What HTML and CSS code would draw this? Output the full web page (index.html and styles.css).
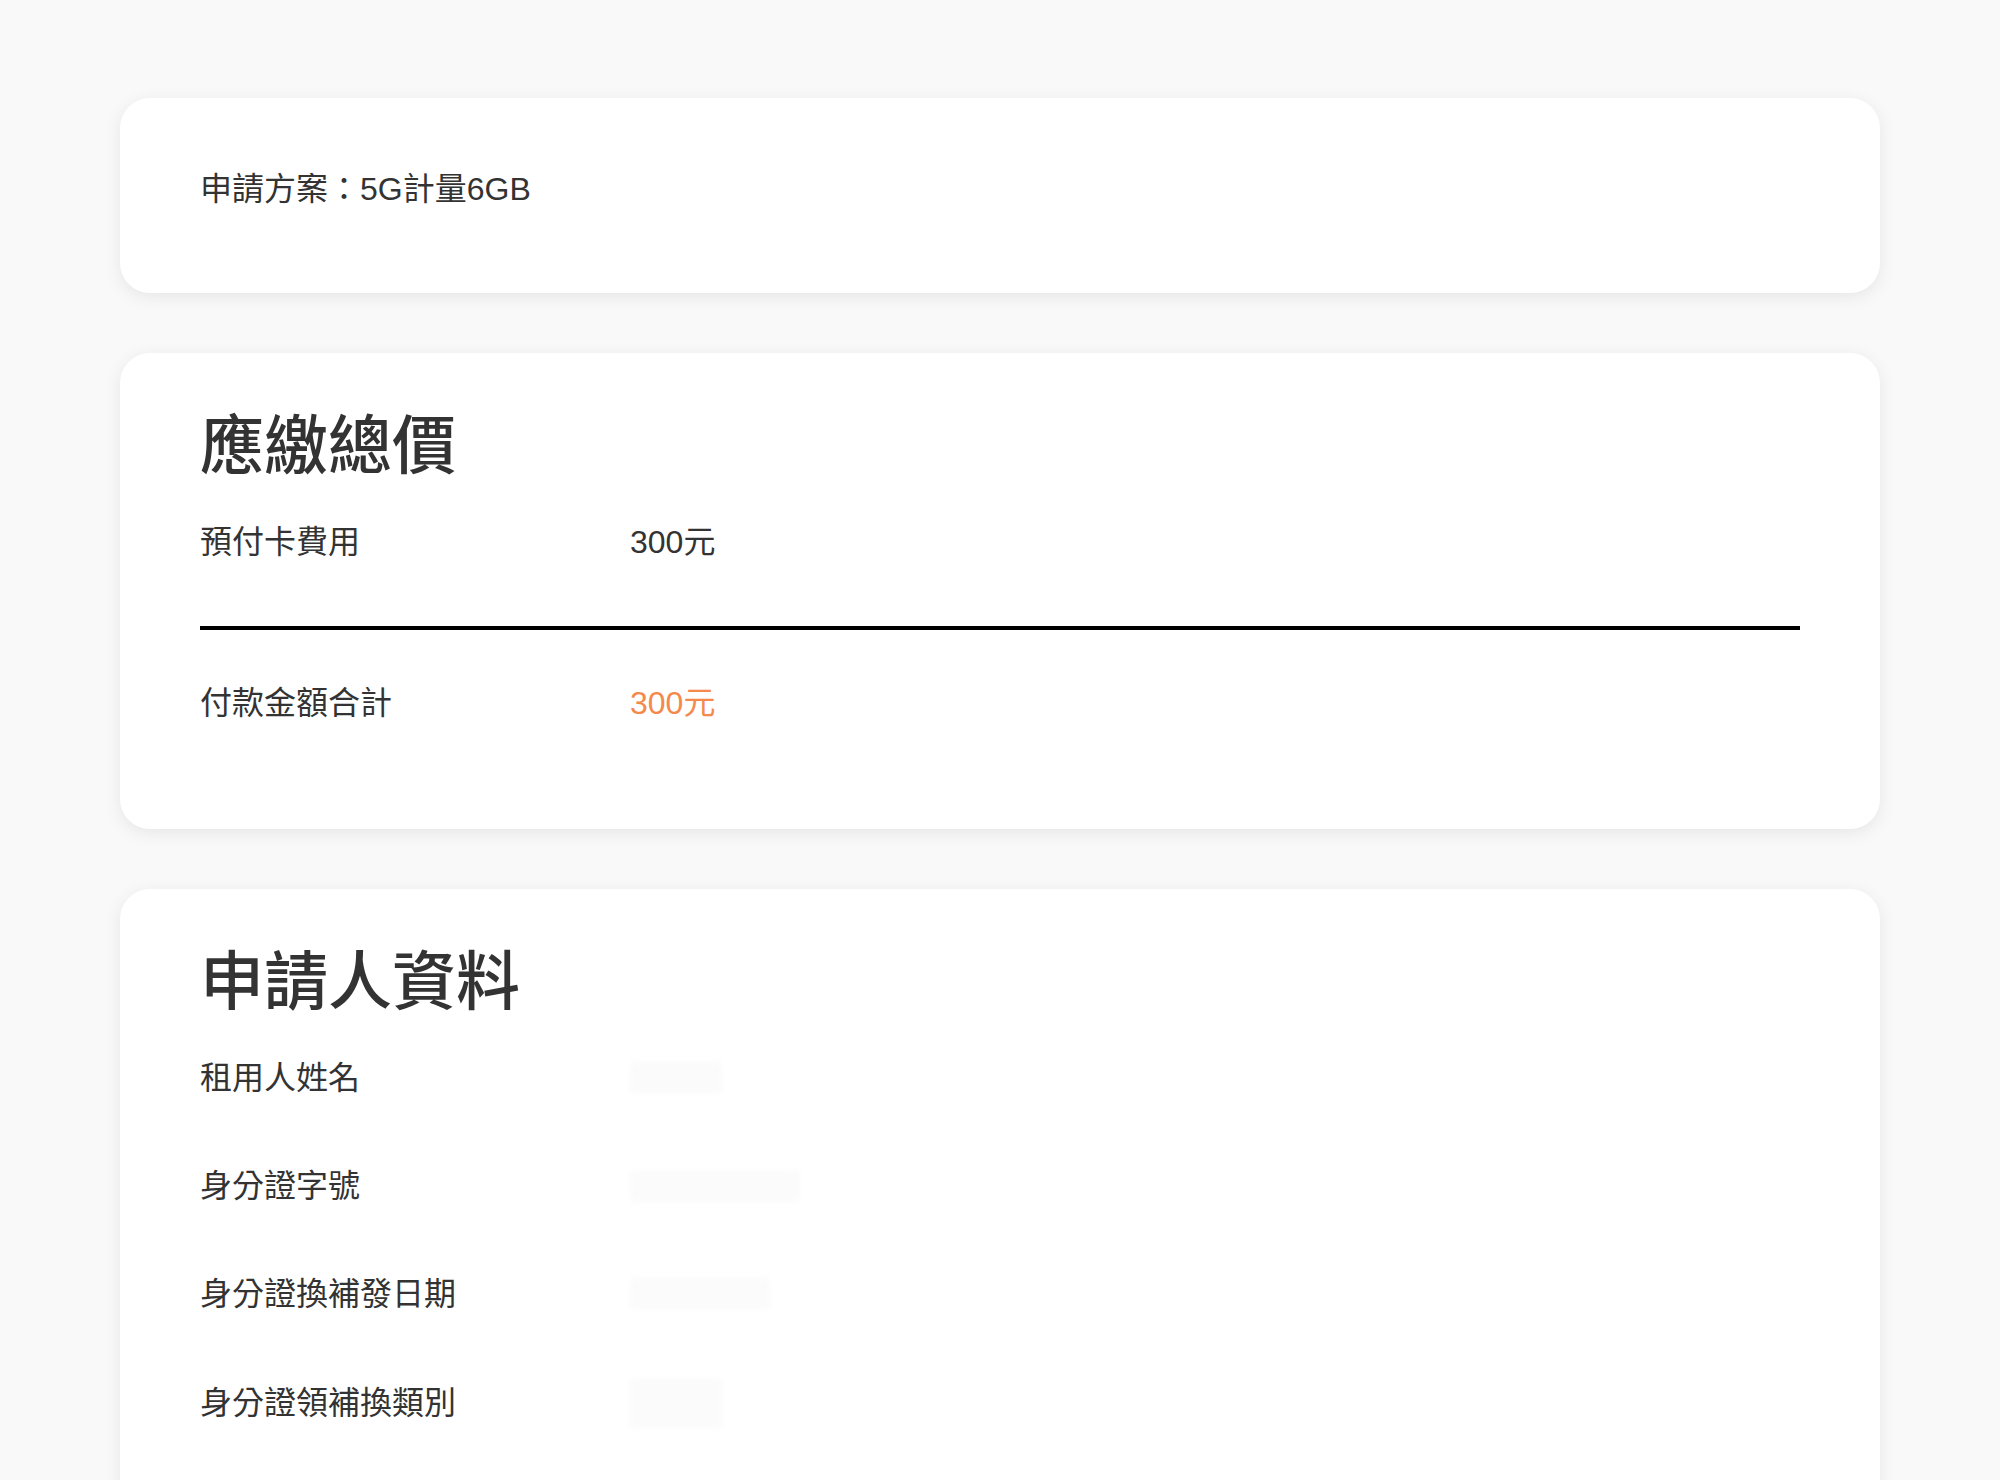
FILE: index.html
```html
<!DOCTYPE html>
<html lang="zh-Hant">
<head>
<meta charset="utf-8">
<title>申請資料確認</title>
<link rel="stylesheet" href="styles.css">
</head>
<body>
<main class="page">
  <section class="card card-plan">
    <p class="plan">申請方案：5G計量6GB</p>
  </section>

  <section class="card card-total">
    <h2 class="card-title">應繳總價</h2>
    <div class="row">
      <span class="label">預付卡費用</span>
      <span class="value">300元</span>
    </div>
    <hr class="divider">
    <div class="row row-sum">
      <span class="label">付款金額合計</span>
      <span class="value value-accent">300元</span>
    </div>
  </section>

  <section class="card card-applicant">
    <h2 class="card-title">申請人資料</h2>
    <div class="row">
      <span class="label">租用人姓名</span>
      <span class="value"><span class="redacted redacted-s"></span></span>
    </div>
    <div class="row">
      <span class="label">身分證字號</span>
      <span class="value"><span class="redacted redacted-l"></span></span>
    </div>
    <div class="row">
      <span class="label">身分證換補發日期</span>
      <span class="value"><span class="redacted redacted-m"></span></span>
    </div>
    <div class="row">
      <span class="label">身分證領補換類別</span>
      <span class="value"><span class="redacted redacted-s redacted-tall"></span></span>
    </div>
  </section>
</main>
</body>
</html>
```

FILE: styles.css
```css
html, body {
  margin: 0;
  padding: 0;
  background: #f9f9f9;
}

body {
  font-family: "Liberation Sans", "Noto Sans CJK TC", sans-serif;
  color: #333333;
  font-size: 32px;
  line-height: 48px;
}

.page {
  display: flex;
  flex-direction: column;
  gap: 60px;
  padding: 98px 120px 0;
}

.card {
  background: #ffffff;
  border-radius: 30px;
  box-shadow: 0 4px 18px rgba(0, 0, 0, 0.08);
  padding: 52px 80px 72px;
}

.card-plan {
  padding: 67px 80px 80px;
}

.plan {
  margin: 0;
}

.card-title {
  margin: 0;
  font-size: 64px;
  line-height: 83px;
  font-weight: 500;
  color: #333333;
}

.row {
  display: flex;
  align-items: center;
  padding: 30px 0;
}

.row-sum {
  padding-top: 49px;
}

.label {
  width: 430px;
  flex: none;
}

.value {
  display: flex;
  align-items: center;
  min-height: 48px;
}

.value-accent {
  color: #f5894b;
}

.divider {
  margin: 30px 0 0;
  border: 0;
  height: 4px;
  background: #000000;
}

.card-applicant {
  padding-bottom: 200px;
}

.redacted {
  display: block;
  height: 32px;
  background: #fbfbfb;
  border-radius: 4px;
  filter: blur(3px);
}

.redacted-s { width: 92px; }
.redacted-m { width: 140px; }
.redacted-l { width: 170px; }
.redacted-tall { height: 50px; }
```
